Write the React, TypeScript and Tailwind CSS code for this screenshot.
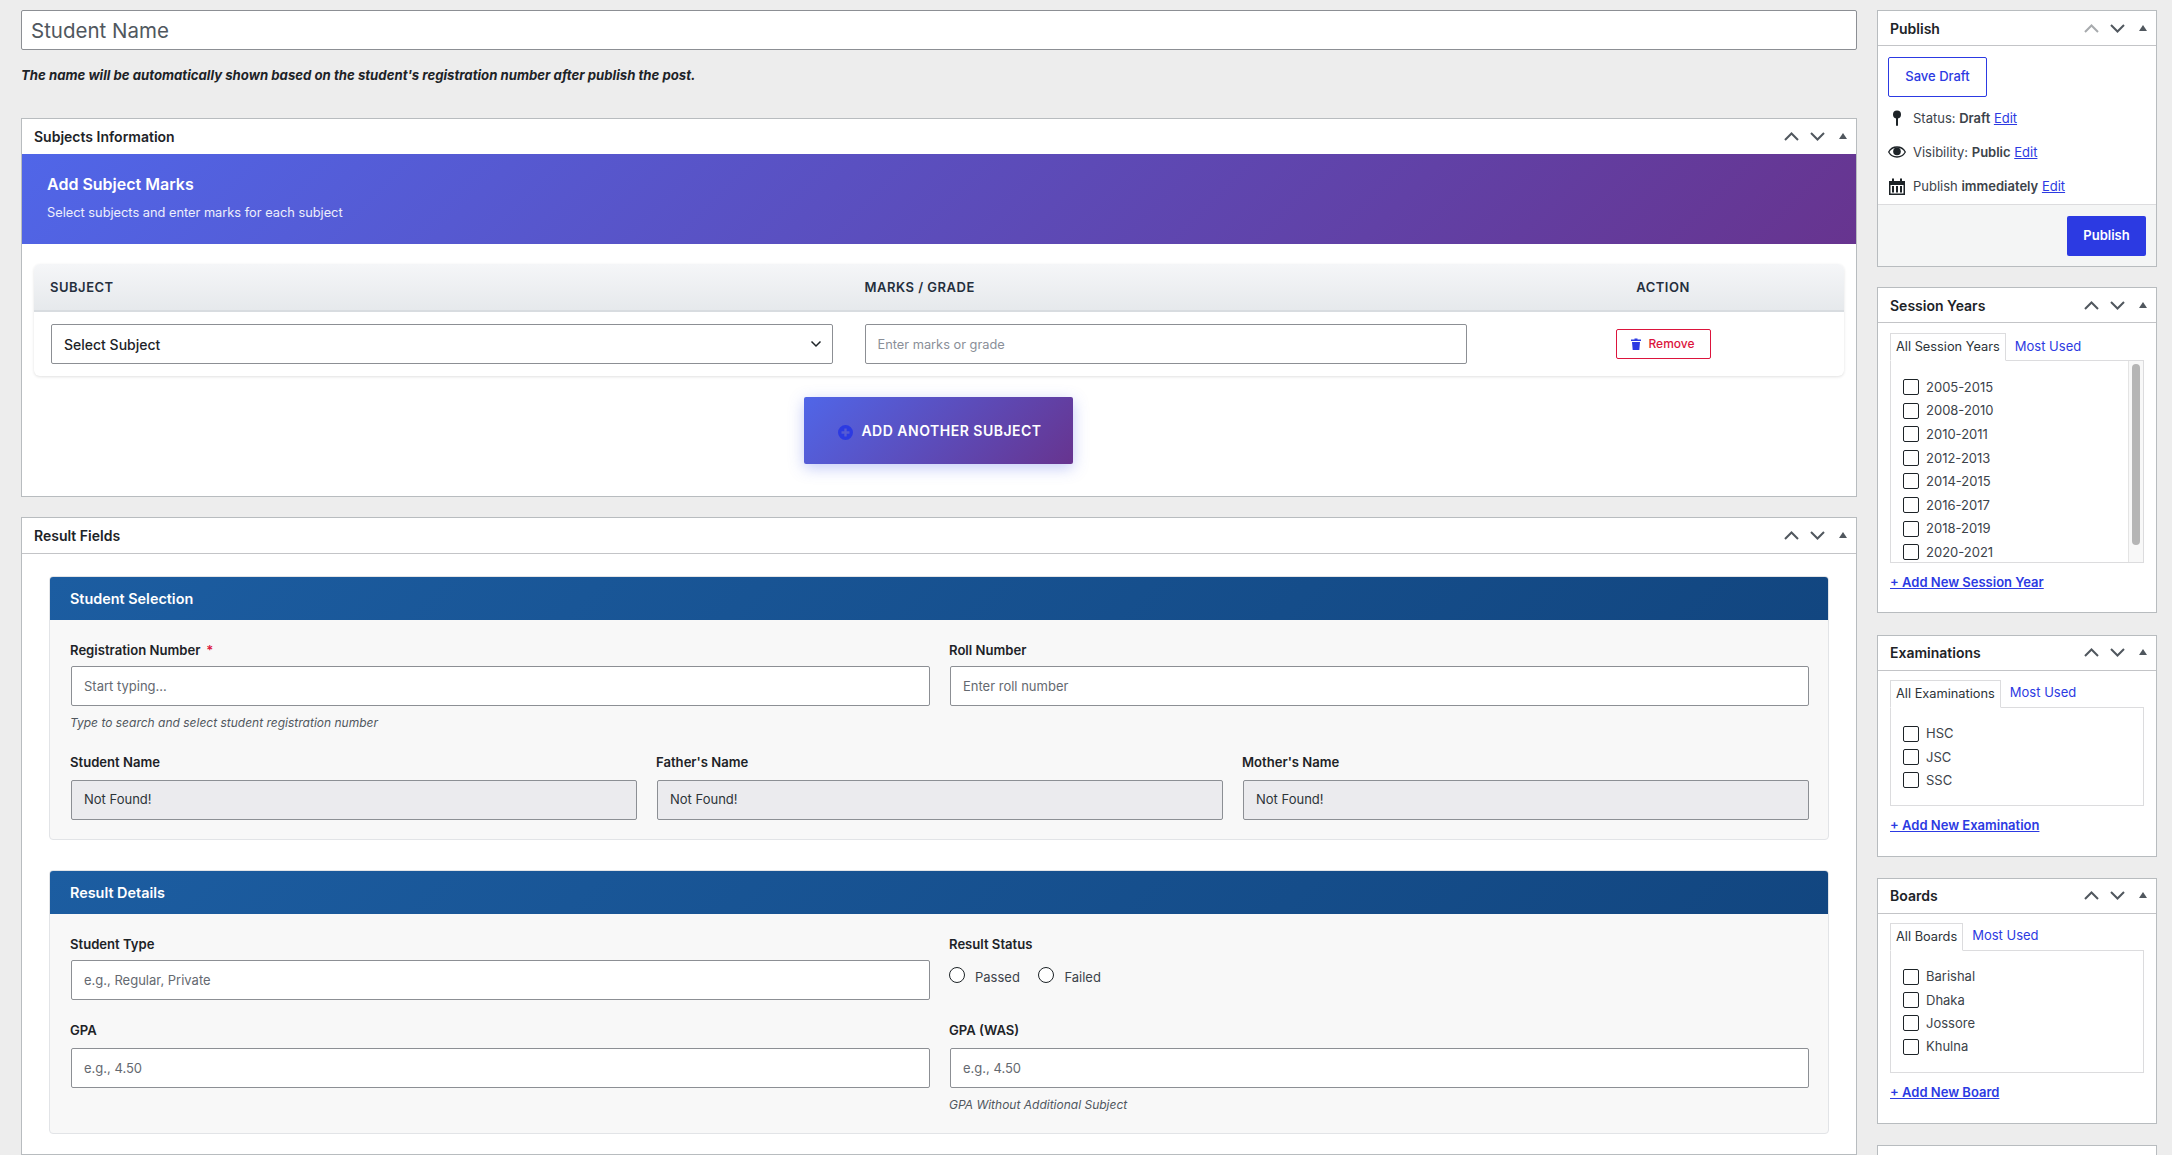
import type { ReactNode } from "react";

function BoxControls({ upDisabled = false }: { upDisabled?: boolean }) {
	return (
		<div className="flex items-center gap-[11px] text-[#50575e]">
			<svg width="15" height="9" viewBox="0 0 15 9" fill="none" className={upDisabled ? "text-[#a7aaad]" : ""}>
				<path d="M1 8L7.5 1.5L14 8" stroke="currentColor" strokeWidth="2" />
			</svg>
			<svg width="15" height="9" viewBox="0 0 15 9" fill="none">
				<path d="M1 1L7.5 7.5L14 1" stroke="currentColor" strokeWidth="2" />
			</svg>
			<svg width="8" height="6" viewBox="0 0 8 6" className="ml-[3px] mb-[1px]">
				<path d="M4 0L8 6H0Z" fill="currentColor" />
			</svg>
		</div>
	);
}

function SideBox({ title, upDisabled, children, className = "" }: { title: string; upDisabled?: boolean; children?: ReactNode; className?: string }) {
	return (
		<div className={`shrink-0 border border-[#b8bcbf] bg-white ${className}`}>
			<div className="flex h-[35px] items-center justify-between border-b border-[#c3c4c7] pl-[12px] pr-[9px]">
				<h2 className="text-[14px] font-semibold text-[#1d2327]">{title}</h2>
				<BoxControls upDisabled={upDisabled} />
			</div>
			{children}
		</div>
	);
}

function TaxBox({ allLabel, items, addLabel, listH, rowGap, bodyTop, className = "" }: { allLabel: string; items: string[]; addLabel: string; listH: string; rowGap: string; bodyTop: string; className?: string }) {
	return (
		<SideBox title={allLabel.replace("All ", "")} className={className}>
			<div className={`px-[12px] ${bodyTop}`}>
				<div className="flex h-[27px] items-stretch">
					<div className="-mb-px z-10 flex items-center border border-b-white border-[#dcdcde] bg-white px-[5px] text-[12.8px] text-[#2c3338]">{allLabel}</div>
					<div className="flex items-center px-[9px] text-[13px] text-[#2c3ae2]">Most Used</div>
				</div>
				<div className={`relative overflow-hidden border border-[#dcdcde] ${listH}`}>
					<div className={`flex flex-col pl-[12px] pt-[18px] ${rowGap}`}>
						{items.map((item) => (
							<label key={item} className="flex h-[16px] shrink-0 items-center gap-[7px] text-[13px] text-[#3c434a]">
								<input type="checkbox" className="size-[16px] appearance-none rounded-[2px] border border-[#1d2327] bg-white" />
								<span className="mt-[1px]">{item}</span>
							</label>
						))}
					</div>
					{items.length > 4 && (
						<div className="absolute inset-y-0 right-0 w-[15px] border-l border-[#e4e4e4] bg-[#f8f8f8]">
							<div className="ml-[3px] mt-[3px] h-[181px] w-[8px] rounded-full bg-[#b5b5b5]" />
						</div>
					)}
				</div>
				<a className="mt-[10px] block text-[13px] font-semibold leading-[18px] text-[#2c3ae2] underline">{addLabel}</a>
			</div>
		</SideBox>
	);
}

function PublishBox() {
	return (
		<SideBox title="Publish" upDisabled>
			<div className="flex flex-col px-[10px] pt-[11px] h-[158px]">
				<button className="h-[40px] w-[99px] rounded-[2px] border border-[#2c3ae2] text-[13px] font-medium text-[#2c3ae2]">Save Draft</button>
				<div className="mt-[11px] flex flex-col gap-[14px] text-[13px] leading-[20px] text-[#3c434a]">
					<div className="flex items-center">
						<svg width="18" height="18" viewBox="0 0 18 18" className="mr-[7px] shrink-0 text-[#1d2327]">
							<circle cx="9" cy="5.5" r="4" fill="currentColor" />
							<rect x="8" y="7" width="2" height="10" rx="1" fill="currentColor" />
						</svg>
						<span>
							Status: <b className="font-semibold">Draft</b> <a className="text-[#2c3ae2] underline">Edit</a>
						</span>
					</div>
					<div className="flex items-center">
						<svg width="18" height="12" viewBox="0 0 18 12" className="mr-[7px] shrink-0 text-[#1d2327]">
							<path d="M9 1C5.2 1 2.2 3.2 0.7 6C2.2 8.8 5.2 11 9 11C12.8 11 15.8 8.8 17.3 6C15.8 3.2 12.8 1 9 1Z" fill="none" stroke="currentColor" strokeWidth="1.3" />
							<circle cx="9" cy="5.4" r="3.8" fill="currentColor" />
						</svg>
						<span>
							Visibility: <b className="font-semibold">Public</b> <a className="text-[#2c3ae2] underline">Edit</a>
						</span>
					</div>
					<div className="flex items-center">
						<svg width="18" height="17" viewBox="0 0 18 17" className="mr-[7px] shrink-0 text-[#1d2327]">
							<path d="M1 3H4V0.5H6V3H12V0.5H14V3H17V17H1ZM2.5 7V15.5H15.5V7Z" fill="currentColor" fillRule="evenodd" />
							<rect x="4" y="8" width="2" height="6.5" fill="currentColor" />
							<rect x="8" y="8" width="2" height="6.5" fill="currentColor" />
							<rect x="12" y="8" width="2" height="6.5" fill="currentColor" />
						</svg>
						<span>
							Publish <b className="font-semibold">immediately</b> <a className="text-[#2c3ae2] underline">Edit</a>
						</span>
					</div>
				</div>
			</div>
			<div className="flex h-[62px] items-center justify-end border-t border-[#dcdcde] bg-[#f4f5f5] pr-[10px]">
				<button className="h-[40px] w-[79px] rounded-[2px] bg-[#2c3ae2] text-[13px] font-semibold text-white">Publish</button>
			</div>
		</SideBox>
	);
}

function MainBox({ title, children, className = "" }: { title: string; children: ReactNode; className?: string }) {
	return (
		<div className={`shrink-0 border border-[#b8bcbf] bg-white ${className}`}>
			<div className="flex h-[35px] items-center justify-between pl-[12px] pr-[9px]">
				<h2 className="text-[14px] font-semibold text-[#1d2327]">{title}</h2>
				<BoxControls />
			</div>
			{children}
		</div>
	);
}

function Field({ label, placeholder, required, help, value, labelGap = "mb-[6px]" }: { label: string; placeholder?: string; required?: boolean; help?: string; value?: string; labelGap?: string }) {
	return (
		<div>
			<label className={`-ml-px block text-[13.1px] font-semibold leading-[20px] text-[#1d2327] ${labelGap}`}>
				{label}
				{required && <span className="ml-[6px] text-[#dc143c]">*</span>}
			</label>
			{value ? (
				<div className="flex h-[40px] items-center rounded-[2px] border border-[#8c8f94] bg-[#ebebee] px-[12px] text-[13px] text-[#2c3338]">{value}</div>
			) : (
				<input placeholder={placeholder} className="block h-[40px] w-full rounded-[2px] border border-[#8c8f94] bg-white px-[12px] text-[13px] text-[#2c3338] placeholder:text-[#646970]" />
			)}
			{help && <p className="-ml-px mt-[8px] text-[12px] italic leading-[18px] text-[#50575e]">{help}</p>}
		</div>
	);
}

function Section({ title, children, className = "" }: { title: string; children: ReactNode; className?: string }) {
	return (
		<div className={`overflow-hidden rounded-[4px] border border-[#e2e4e7] bg-[#f8f8f8] ${className}`}>
			<div className="flex h-[43px] items-center bg-[linear-gradient(135deg,#1c5da1,#124680)] px-[20px] text-[14.4px] font-semibold text-white">{title}</div>
			{children}
		</div>
	);
}

function SubjectsBox() {
	return (
		<MainBox title="Subjects Information" className="h-[379px]">
			<div className="flex h-[90px] flex-col justify-center bg-[linear-gradient(135deg,#5066e8,#67348f)] pb-[2px] pl-[25px] text-white">
				<h3 className="text-[16px] font-semibold leading-[20px]">Add Subject Marks</h3>
				<p className="mt-[10px] text-[12.8px] leading-[18px] text-white/90">Select subjects and enter marks for each subject</p>
			</div>
			<div className="px-[12px] pt-[20px]">
				<div className="overflow-hidden rounded-[6px] bg-white shadow-[0_1px_3px_rgba(0,0,0,0.12)]">
					<div className="grid h-[48px] grid-cols-[45%_35%_20%] items-center border-b-2 border-[#d8dce0] bg-[linear-gradient(180deg,#f5f6f8,#e6e9ec)] pt-[1px] text-[13px] font-semibold tracking-[0.5px] text-[#252f3d]">
						<div className="pl-[16px]">SUBJECT</div>
						<div className="pl-[16px]">MARKS / GRADE</div>
						<div className="text-center">ACTION</div>
					</div>
					<div className="grid h-[64px] grid-cols-[45%_35%_20%] items-center">
						<div className="relative pl-[17px] pr-[16px]">
							<select className="block h-[40px] w-full appearance-none rounded-[2px] border border-[#8c8f94] bg-white px-[12px] text-[14px] font-medium text-[#1d2327]">
								<option>Select Subject</option>
							</select>
							<svg width="12" height="8" viewBox="0 0 12 8" fill="none" className="absolute right-[27px] top-[16px] text-[#1d2327]">
								<path d="M1.5 1.5L6 6L10.5 1.5" stroke="currentColor" strokeWidth="1.5" />
							</svg>
						</div>
						<div className="pl-[16px] pr-[15px]">
							<input placeholder="Enter marks or grade" className="block h-[40px] w-full rounded-[2px] border border-[#8c8f94] bg-white px-[12px] text-[12.8px] placeholder:text-[#8a8f98]" />
						</div>
						<div className="flex justify-center">
							<button className="flex h-[30px] w-[95px] items-center justify-center gap-[7px] rounded-[2px] border border-[#dc143c] bg-white text-[12px] font-medium text-[#dc143c]">
								<svg width="10" height="12" viewBox="0 0 10 12" className="text-[#2c3ae2]">
									<path d="M3.5 0.5H6.5V1.5H10V3H0V1.5H3.5ZM1 4H9L8.3 12H1.7Z" fill="currentColor" />
								</svg>
								Remove
							</button>
						</div>
					</div>
				</div>
				<div className="mt-[21px] flex justify-center pr-[1px]">
					<button className="flex h-[67px] w-[269px] items-center justify-center gap-[8px] rounded-[2px] bg-[linear-gradient(135deg,#5066e8,#67348f)] pl-[3px] text-[14px] font-semibold tracking-[0.5px] text-white shadow-[0_4px_15px_rgba(80,102,232,0.35)]">
						<svg width="15" height="15" viewBox="0 0 15 15" className="mt-[3px] text-[#2c3ae2]">
							<path d="M7.5 0A7.5 7.5 0 1 0 7.5 15A7.5 7.5 0 1 0 7.5 0ZM6.3 3.5H8.7V6.3H11.5V8.7H8.7V11.5H6.3V8.7H3.5V6.3H6.3Z" fill="currentColor" fillRule="evenodd" />
						</svg>
						ADD ANOTHER SUBJECT
					</button>
				</div>
			</div>
		</MainBox>
	);
}

function Radio({ label }: { label: string }) {
	return (
		<label className="flex items-center gap-[10px] text-[13px] text-[#3c434a]">
			<input type="radio" className="-mt-[7px] size-[16px] appearance-none rounded-full border border-[#1d2327] bg-white" />
			{label}
		</label>
	);
}

function ResultFieldsBox() {
	return (
		<div className="min-h-0 flex-1 border border-[#b8bcbf] bg-white">
			<div className="flex h-[36px] items-center justify-between border-b border-[#c3c4c7] pl-[12px] pr-[9px]">
				<h2 className="text-[14px] font-semibold text-[#1d2327]">Result Fields</h2>
				<BoxControls />
			</div>
			<div className="px-[27px] pt-[22px]">
				<Section title="Student Selection" className="h-[264px]">
					<div className="flex flex-col gap-[20px] pl-[21px] pr-[19px] pt-[20px]">
						<div className="grid grid-cols-2 gap-[20px]">
							<Field label="Registration Number" required placeholder="Start typing..." help="Type to search and select student registration number" />
							<Field label="Roll Number" placeholder="Enter roll number" />
						</div>
						<div className="grid grid-cols-3 gap-[20px]">
							<Field label="Student Name" value="Not Found!" labelGap="mb-[8px]" />
							<Field label="Father's Name" value="Not Found!" labelGap="mb-[8px]" />
							<Field label="Mother's Name" value="Not Found!" labelGap="mb-[8px]" />
						</div>
					</div>
				</Section>
				<Section title="Result Details" className="mt-[30px] h-[264px]">
					<div className="flex flex-col gap-[20px] pl-[21px] pr-[19px] pt-[20px]">
						<div className="grid grid-cols-2 gap-[20px]">
							<Field label="Student Type" placeholder="e.g., Regular, Private" />
							<div>
								<label className="-ml-px mb-[6px] block text-[13.1px] font-semibold leading-[20px] text-[#1d2327]">Result Status</label>
								<div className="-ml-px flex h-[40px] items-center gap-[18.5px] pb-[4px]">
									<Radio label="Passed" />
									<Radio label="Failed" />
								</div>
							</div>
						</div>
						<div className="grid grid-cols-2 gap-[20px]">
							<Field label="GPA" placeholder="e.g., 4.50" labelGap="mb-[8px]" />
							<Field label="GPA (WAS)" placeholder="e.g., 4.50" labelGap="mb-[8px]" help="GPA Without Additional Subject" />
						</div>
					</div>
				</Section>
			</div>
		</div>
	);
}

export default function App() {
	return (
		<div className="flex h-[1155px] gap-[20px] overflow-hidden bg-[#ededed] pl-[21px] pr-[15px] pt-[10px] [font-family:Inter,sans-serif]">
			{/* Main column */}
			<div className="flex w-[1836px] shrink-0 flex-col">
				<input placeholder="Student Name" className="block h-[40px] w-full shrink-0 rounded-[2px] border border-[#8c8f94] bg-white px-[9px] text-[20.5px] placeholder:text-[#50575e]" />
				<p className="mt-[16px] text-[13.2px] font-bold italic leading-[18px] text-[#1d2327]">
					The name will be automatically shown based on the student's registration number after publish the post.
				</p>
				<div className="mt-[34px] flex min-h-0 flex-1 flex-col gap-[20px]">
					<SubjectsBox />
					<ResultFieldsBox />
				</div>
			</div>

			{/* Sidebar */}
			<div className="flex w-[280px] shrink-0 flex-col gap-[20px]">
				<PublishBox />
				<TaxBox
					allLabel="All Session Years"
					items={["2005-2015", "2008-2010", "2010-2011", "2012-2013", "2014-2015", "2016-2017", "2018-2019", "2020-2021"]}
					addLabel="+ Add New Session Year"
					listH="h-[203px]"
					rowGap="gap-[7.6px]"
					bodyTop="pt-[10px]"
					className="h-[326px]"
				/>
				<TaxBox
					allLabel="All Examinations"
					items={["HSC", "JSC", "SSC"]}
					addLabel="+ Add New Examination"
					listH="h-[99px]"
					rowGap="gap-[7.4px]"
					bodyTop="pt-[9px]"
					className="mt-[1.5px] h-[222px]"
				/>
				<TaxBox
					allLabel="All Boards"
					items={["Barishal", "Dhaka", "Jossore", "Khulna"]}
					addLabel="+ Add New Board"
					listH="h-[123px]"
					rowGap="gap-[7.4px]"
					bodyTop="pt-[9px]"
					className="mt-px h-[246px]"
				/>
				<div className="mt-px h-[60px] shrink-0 border border-[#b8bcbf] bg-white" />
			</div>
		</div>
	);
}
